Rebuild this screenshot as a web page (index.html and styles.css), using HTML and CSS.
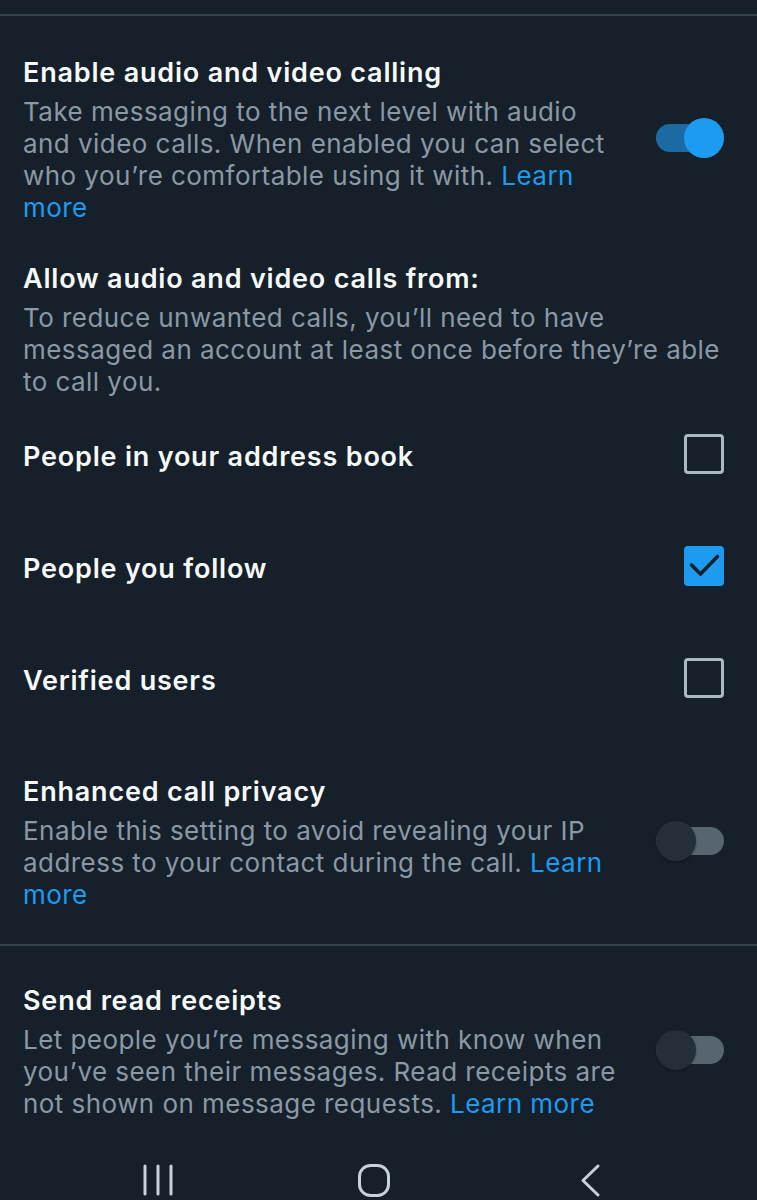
FILE: index.html
```html
<!DOCTYPE html>
<html lang="en">
<head>
<meta charset="utf-8">
<title>Direct Messages settings</title>
<link rel="stylesheet" href="styles.css">
</head>
<body>
<main class="screen">
  <div class="divider divider-top"></div>

  <section class="setting setting-first">
    <div class="setting-text">
      <h2 class="title">Enable audio and video calling</h2>
      <p class="desc">Take messaging to the next level with audio<br>and video calls. When enabled you can select<br>who you’re comfortable using it with. <a class="link" href="#">Learn<br>more</a></p>
    </div>
    <div class="switch switch-on"><span class="track"></span><span class="thumb"></span></div>
  </section>

  <section class="setting setting-heading">
    <div class="setting-text">
      <h2 class="title">Allow audio and video calls from:</h2>
      <p class="desc">To reduce unwanted calls, you’ll need to have<br>messaged an account at least once before they’re able<br>to call you.</p>
    </div>
  </section>

  <div class="option">
    <span class="option-label">People in your address book</span>
    <span class="checkbox"></span>
  </div>
  <div class="option">
    <span class="option-label">People you follow</span>
    <span class="checkbox checkbox-checked">
      <svg viewBox="0 0 40 40" width="40" height="40"><polyline points="7.5,19 16.5,28 33.5,10.5" fill="none" stroke="#15202b" stroke-width="3.6" stroke-linecap="round" stroke-linejoin="round"/></svg>
    </span>
  </div>
  <div class="option">
    <span class="option-label">Verified users</span>
    <span class="checkbox"></span>
  </div>

  <section class="setting setting-privacy">
    <div class="setting-text">
      <h2 class="title">Enhanced call privacy</h2>
      <p class="desc">Enable this setting to avoid revealing your IP<br>address to your contact during the call. <a class="link" href="#">Learn<br>more</a></p>
    </div>
    <div class="switch switch-off"><span class="track"></span><span class="thumb"></span></div>
  </section>

  <div class="divider"></div>

  <section class="setting setting-receipts">
    <div class="setting-text">
      <h2 class="title">Send read receipts</h2>
      <p class="desc">Let people you’re messaging with know when<br>you’ve seen their messages. Read receipts are<br>not shown on message requests. <a class="link" href="#">Learn more</a></p>
    </div>
    <div class="switch switch-off"><span class="track"></span><span class="thumb"></span></div>
  </section>

  <nav class="navbar">
    <svg class="nav-recents" viewBox="0 0 30 32" width="30" height="32"><g stroke="#c9d1d9" stroke-width="3" stroke-linecap="round"><line x1="2" y1="2" x2="2" y2="30"/><line x1="15" y1="2" x2="15" y2="30"/><line x1="28" y1="2" x2="28" y2="30"/></g></svg>
    <svg class="nav-home" viewBox="0 0 32 33" width="32" height="33"><rect x="1.5" y="1.5" width="29" height="30" rx="11" fill="none" stroke="#c9d1d9" stroke-width="3"/></svg>
    <svg class="nav-back" viewBox="0 0 20 33" width="20" height="33"><polyline points="18,2 3,16.5 18,31" fill="none" stroke="#c9d1d9" stroke-width="3" stroke-linecap="round" stroke-linejoin="round"/></svg>
  </nav>
</main>
</body>
</html>
```

FILE: styles.css
```css
* { box-sizing: border-box; }

html, body {
  margin: 0;
  padding: 0;
  background: #15202b;
}

body {
  font-family: Inter, Roboto, "Noto Sans", "Liberation Sans", sans-serif;
  color: #f7f9f9;
}

.screen {
  width: 757px;
  min-height: 1200px;
  background: #15202b;
  display: flex;
  flex-direction: column;
}

.divider {
  height: 2px;
  background: #38444d;
  flex: none;
}

.divider-top {
  margin-top: 14px;
}

.setting {
  display: flex;
  align-items: center;
  padding: 20px 33px 19px 23px;
}

.setting-first { padding-top: 40px; }
.setting-heading { padding-top: 19px; padding-bottom: 1px; }
.setting-privacy { padding-top: 40px; padding-bottom: 33px; }
.setting-receipts { padding-top: 38px; padding-bottom: 0; }

.setting-text {
  flex: 1;
  min-width: 0;
}

.title {
  margin: 0 0 6px;
  font-size: 27px;
  line-height: 34px;
  font-weight: 600;
  letter-spacing: 0.8px;
  color: #f7f9f9;
  white-space: nowrap;
}

.desc {
  margin: 0;
  font-size: 26px;
  line-height: 32px;
  font-weight: 400;
  letter-spacing: 0.45px;
  color: #8b98a5;
  white-space: nowrap;
}

.link {
  color: #1d9bf0;
  text-decoration: none;
}

/* switches */
.switch {
  position: relative;
  flex: none;
  width: 68px;
  height: 40px;
  margin-top: -4px;
}

.track {
  position: absolute;
  left: 0;
  top: 6px;
  width: 68px;
  height: 28px;
  border-radius: 14px;
}

.thumb {
  position: absolute;
  top: 0;
  width: 40px;
  height: 40px;
  border-radius: 50%;
}

.switch-on .track { background: #1c6aa3; }
.switch-on .thumb { right: 0; background: #1d9bf0; }

.switch-off .track { background: #56656f; }
.switch-off .thumb {
  left: 0;
  background: #252f39;
  box-shadow: 0 1px 2px rgba(0, 0, 0, 0.35);
}

/* checkbox options */
.option {
  height: 112px;
  display: flex;
  align-items: center;
  justify-content: space-between;
  padding: 0 33px 0 23px;
}

.option-label {
  font-size: 27px;
  line-height: 34px;
  font-weight: 600;
  letter-spacing: 0.8px;
  color: #f7f9f9;
  padding-top: 4px;
}

.checkbox {
  flex: none;
  width: 40px;
  height: 40px;
  border: 3px solid #aab8c2;
  border-radius: 4px;
  margin-top: -2px;
}

.checkbox-checked {
  border: none;
  background: #1d9bf0;
  display: flex;
}

/* system navigation bar */
.navbar {
  display: flex;
  align-items: center;
  height: 80px;
  padding: 40px 0 0 143px;
  margin-top: auto;
}

.nav-recents { flex: none; }
.nav-home { flex: none; margin-left: 185px; }
.nav-back { flex: none; margin-left: 190px; }
```
